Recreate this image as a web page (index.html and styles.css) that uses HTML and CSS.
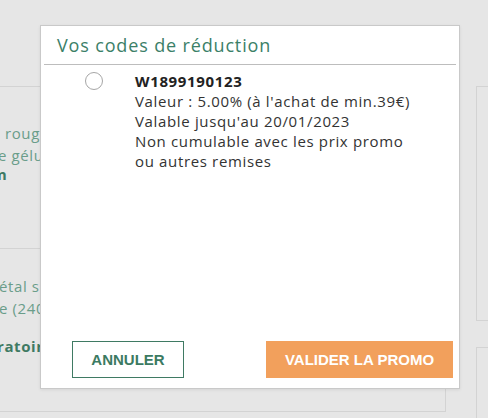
FILE: index.html
```html
<!DOCTYPE html>
<html lang="fr">
  <head>
    <meta charset="utf-8">
    <title>Vos codes de réduction</title>
    <link rel="stylesheet" href="styles.css">
  </head>
  <body>
    <div class="page">
      <div class="col-main">
        <div class="card">
          <div class="card-part part-a">
            <div class="bg-line l1">rouge et blanc</div>
            <div class="bg-line l2">e gélules</div>
            <div class="bg-line strong l3">m</div>
          </div>
          <div class="card-part part-b">
            <div class="bg-line l4">étal sur</div>
            <div class="bg-line l5">e (240 ml)</div>
            <div class="bg-line strong l6">ratoire</div>
          </div>
        </div>
      </div>
      <div class="col-side">
        <div class="card side-a"></div>
        <div class="card side-b"></div>
      </div>
    </div>

    <div class="modal">
      <div class="modal-head">
        <h2 class="modal-title">Vos codes de réduction</h2>
      </div>
      <div class="modal-body">
        <label class="coupon">
          <span class="radio"></span>
          <span class="coupon-info">
            <strong class="coupon-code">W1899190123</strong>
            <span>Valeur : 5.00% (à l'achat de min.39€)</span>
            <span>Valable jusqu'au 20/01/2023</span>
            <span>Non cumulable avec les prix promo<br>ou autres remises</span>
          </span>
        </label>
      </div>
      <div class="modal-foot">
        <button class="btn btn-cancel">Annuler</button>
        <button class="btn btn-apply">Valider la promo</button>
      </div>
    </div>
  </body>
</html>
```

FILE: styles.css
```css
html, body {
  margin: 0;
  height: 100%;
}

body {
  background: #e6e6e6;
  font-family: "Open Sans", "DejaVu Sans", sans-serif;
  overflow: hidden;
}

/* page under the overlay */
.page {
  display: flex;
  gap: 30px;
  padding-top: 86px;
  margin-left: -40px;
}

.col-main {
  flex: none;
  width: 486px;
}

.col-side {
  flex: none;
  display: flex;
  flex-direction: column;
  gap: 26px;
  width: 200px;
}

.card {
  border: 1px solid #d3d3d3;
}

.part-a {
  height: 162px;
  padding-top: 35px;
  box-sizing: border-box;
  border-bottom: 1px solid #d3d3d3;
}

.part-b {
  height: 162px;
  padding-top: 26px;
  box-sizing: border-box;
}

.side-a {
  height: 233px;
}

.side-b {
  height: 120px;
}

.bg-line {
  font-size: 15px;
  line-height: 22px;
  letter-spacing: 0.6px;
  color: #6a9d8a;
  white-space: nowrap;
}

.bg-line.strong {
  font-weight: 700;
  color: #3f7a63;
}

.l1 { margin-left: 44px; }
.l2 { margin-left: 37px; }
.l3 { margin-left: 31px; line-height: 16px; }
.l4 { margin-left: 38px; }
.l5 { margin-left: 38px; }
.l6 { margin: 16px 0 0 36px; }

/* modal */
.modal {
  position: absolute;
  left: 40px;
  top: 25px;
  width: 418px;
  height: 362px;
  background: #fff;
  border: 1px solid #c9c9c9;
  box-shadow: 0 1px 3px rgba(0, 0, 0, 0.08);
  display: flex;
  flex-direction: column;
}

.modal-head {
  margin: 0 3px;
  padding: 7px 0 0 13px;
  height: 31px;
  border-bottom: 1px solid #bdbdbd;
}

.modal-title {
  margin: 0;
  font-size: 18px;
  line-height: 24px;
  font-weight: 400;
  letter-spacing: 0.85px;
  color: #3b8068;
}

.modal-body {
  flex: 1;
  padding: 6px 0 0 44px;
}

.coupon {
  display: flex;
  gap: 32px;
}

.radio {
  width: 16px;
  height: 16px;
  margin-top: 1px;
  border: 1px solid #a6a6a6;
  border-radius: 50%;
  flex: none;
}

.coupon-info {
  display: flex;
  flex-direction: column;
  font-size: 15px;
  line-height: 20px;
  letter-spacing: 0.65px;
  color: #333;
}

.coupon-code {
  color: #222;
}

.modal-foot {
  display: flex;
  justify-content: space-between;
  padding: 0 6px 10px 31px;
}

.btn {
  height: 37px;
  font-family: "Liberation Sans", Arial, sans-serif;
  font-size: 15px;
  font-weight: 700;
  text-transform: uppercase;
  cursor: pointer;
}

.btn-cancel {
  width: 112px;
  background: #fff;
  border: 1px solid #3f7a63;
  color: #3b7a62;
}

.btn-apply {
  width: 187px;
  background: #f2a05c;
  border: 0;
  color: #fff;
}
```
